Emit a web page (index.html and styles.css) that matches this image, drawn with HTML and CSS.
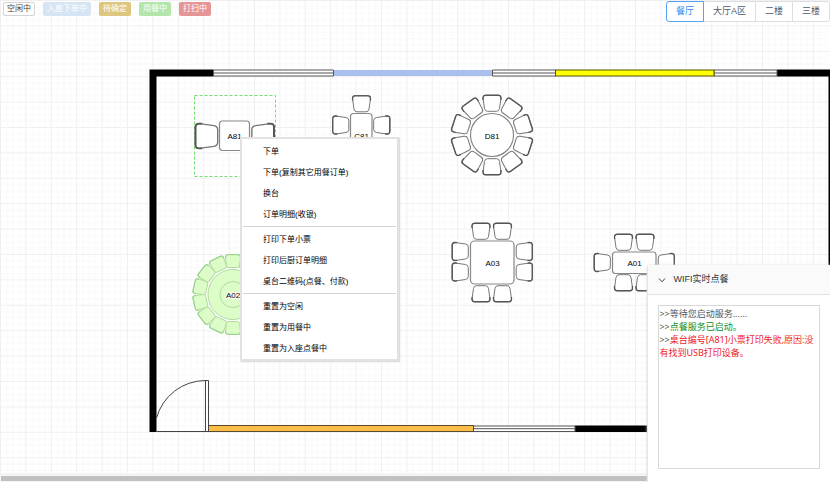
FILE: index.html
```
<!DOCTYPE html>
<html lang="zh-CN">
<head>
<meta charset="utf-8">
<title>餐厅</title>
<link rel="stylesheet" href="styles.css">
</head>
<body>
<main class="workspace">
  <section class="stage">
    <svg class="plan" role="img" aria-label="餐厅">
      <defs>
        <pattern id="grid" width="25.4" height="25.4" patternUnits="userSpaceOnUse">
          <path class="grid-minor" d="M6.8 0V25.4M13.2 0V25.4M19.5 0V25.4M0 6.8H25.4M0 13.2H25.4M0 19.5H25.4"/>
          <path class="grid-major" d="M.5 0V25.4M0 .5H25.4"/>
        </pattern>
        <g id="chair">
          <path class="seat" d="M-6.5 .5H6.5Q9 .5 9 3.5L7.5 14Q7 16.8 4.5 16.8H-4.5Q-7 16.8-7.5 14L-9 3.5Q-9 .5-6.5 .5Z"/>
          <path class="back" d="M-8.9 5.5L-9 3.5Q-9 .8-6.5 .8H6.5Q9 .8 9 3.5L8.9 5.5"/>
        </g>
        <g id="busy-chair">
          <path class="busy" d="M-5 .5H5Q7.6 .5 7.5 3L6.6 11.5Q6.4 13.5 4.5 13.5H-4.5Q-6.4 13.5-6.6 11.5L-7.5 3Q-7.6 .5-5 .5Z"/>
          <path class="busy-back" d="M-7.4 4V3Q-7.5 .7-5 .7H5Q7.5 .7 7.4 3V4"/>
        </g>
      </defs>
      <rect width="100%" height="100%" fill="url(#grid)"/>

      <g class="walls">
        <path d="M149.500 69.500H213.500V76.500H156.500V432H149.500Z"/>
        <path d="M777 69.500H830V265H828.500V76.500H777Z"/>
        <path d="M575 425.500H700V432H575Z"/>
      </g>
      <rect class="blue-bar" x="334" y="70" width="159" height="6"/>
      <g class="window">
        <path d="M213.500 70H333.500V76H213.500ZM213.500 73H333.500"/>
        <path d="M492.500 70H555.500V76H492.500ZM492.500 73H555.500"/>
        <path d="M714 70H777V76H714ZM714 73H777"/>
        <path d="M473.500 426H575V431.500H473.500ZM473.500 428.700H575"/>
      </g>
      <rect class="yellow-bar" x="555.5" y="70" width="158.500" height="6"/>
      <rect class="orange-bar" x="208.500" y="425.500" width="265" height="6"/>
      <path class="door" d="M156.500 431.500H208.500V380.500H205.500V431.500M205.500 380.500A51 51 0 0 0 156.500 418"/>

      <rect class="selection" x="194.500" y="95.500" width="81" height="81"/>
      <g>
        <rect class="table" x="219.500" y="121" width="30" height="29.500" rx="3"/>
        <use href="#chair" transform="translate(194.500 136) rotate(-90) scale(1.38)"/>
        <use href="#chair" transform="translate(275 136) rotate(90) scale(1.38)"/>
        <text x="234.500" y="139">A81</text>
      </g>
      <g>
        <rect class="table" x="350.500" y="113.500" width="21.500" height="43" rx="3"/>
        <use href="#chair" x="361.500" y="95"/>
        <use href="#chair" transform="translate(332 125) rotate(-90)"/>
        <use href="#chair" transform="translate(390.500 125) rotate(90)"/>
        <text x="361.500" y="139">C81</text>
      </g>
      <g transform="translate(492 135)">
        <circle class="table" r="21.500"/>
        <use href="#chair" y="-40.500"/>
        <use href="#chair" y="-41" transform="rotate(36)"/>
        <use href="#chair" y="-41" transform="rotate(72)"/>
        <use href="#chair" y="-41" transform="rotate(108)"/>
        <use href="#chair" y="-41" transform="rotate(144)"/>
        <use href="#chair" y="-40.500" transform="rotate(180)"/>
        <use href="#chair" y="-41" transform="rotate(216)"/>
        <use href="#chair" y="-41" transform="rotate(252)"/>
        <use href="#chair" y="-41" transform="rotate(288)"/>
        <use href="#chair" y="-41" transform="rotate(324)"/>
        <text y="4">D81</text>
      </g>
      <g>
        <rect class="table" x="470.500" y="241" width="43.500" height="43" rx="4"/>
        <use href="#chair" x="481" y="222.500"/>
        <use href="#chair" x="502.500" y="222.500"/>
        <use href="#chair" transform="translate(481 302.500) rotate(180)"/>
        <use href="#chair" transform="translate(502.500 302.500) rotate(180)"/>
        <use href="#chair" transform="translate(451.500 251.500) rotate(-90)"/>
        <use href="#chair" transform="translate(451.500 272) rotate(-90)"/>
        <use href="#chair" transform="translate(533 251.500) rotate(90)"/>
        <use href="#chair" transform="translate(533 272) rotate(90)"/>
        <text x="492.500" y="266">A03</text>
      </g>
      <g>
        <rect class="table" x="612.500" y="252" width="43.500" height="21.500" rx="3"/>
        <use href="#chair" x="623.500" y="233.500"/>
        <use href="#chair" x="645" y="233.500"/>
        <use href="#chair" transform="translate(623.500 291.500) rotate(180)"/>
        <use href="#chair" transform="translate(645 291.500) rotate(180)"/>
        <use href="#chair" transform="translate(593.500 262.500) rotate(-90)"/>
        <use href="#chair" transform="translate(675 262.500) rotate(90)"/>
        <text x="634.500" y="266">A01</text>
      </g>
      <g transform="translate(233 294.500)">
        <circle class="busy" r="25"/>
        <circle class="busy" r="13"/>
        <use href="#busy-chair" y="-40.500"/>
        <use href="#busy-chair" y="-40.500" transform="rotate(25.700)"/>
        <use href="#busy-chair" y="-40.500" transform="rotate(180)"/>
        <use href="#busy-chair" y="-40.500" transform="rotate(205.700)"/>
        <use href="#busy-chair" y="-40.500" transform="rotate(231.400)"/>
        <use href="#busy-chair" y="-40.500" transform="rotate(257.100)"/>
        <use href="#busy-chair" y="-40.500" transform="rotate(282.900)"/>
        <use href="#busy-chair" y="-40.500" transform="rotate(308.600)"/>
        <use href="#busy-chair" y="-40.500" transform="rotate(334.300)"/>
        <text class="halo" y="3">A02</text>
      </g>
    </svg>

    <header class="toolbar">
      <div class="legend">
        <span class="tag tag-free">空闲中</span>
        <span class="tag tag-seated">入座下单中</span>
        <span class="tag tag-pending">待确定</span>
        <span class="tag tag-dining">用餐中</span>
        <span class="tag tag-cleaning">打扫中</span>
      </div>
      <nav class="areas">
        <button class="area area-active" type="button">餐厅</button>
        <button class="area" type="button">大厅A区</button>
        <button class="area" type="button">二楼</button>
        <button class="area" type="button">三楼</button>
      </nav>
    </header>

    <div class="menu">
      <div class="menu-group">
        <button class="menu-item" type="button">下单</button>
        <button class="menu-item" type="button">下单(复制其它用餐订单)</button>
        <button class="menu-item" type="button">换台</button>
        <button class="menu-item" type="button">订单明细(收银)</button>
      </div>
      <div class="menu-group">
        <button class="menu-item" type="button">打印下单小票</button>
        <button class="menu-item" type="button">打印后厨订单明细</button>
        <button class="menu-item" type="button">桌台二维码(点餐、付款)</button>
      </div>
      <div class="menu-group">
        <button class="menu-item" type="button">重置为空闲</button>
        <button class="menu-item" type="button">重置为用餐中</button>
        <button class="menu-item" type="button">重置为入座点餐中</button>
      </div>
    </div>
  </section>
  <div class="scroll-track"><div class="scroll-thumb"></div></div>

  <aside class="panel">
    <button class="panel-head" type="button">
      <svg class="chevron" viewBox="0 0 8 8" aria-hidden="true"><path d="M1 2.500L4 5.800L7 2.500"/></svg>
      <span>WIFI实时点餐</span>
    </button>
    <div class="log">
      <p>&gt;&gt;等待您启动服务......</p>
      <p>&gt;&gt;<span class="ok">点餐服务已启动。</span></p>
      <p>&gt;&gt;<span class="error">桌台编号[A81]小票打印失败,原因:没有找到USB打印设备。</span></p>
    </div>
  </aside>
</main>
</body>
</html>
```
FILE: styles.css
```
* {
  box-sizing: border-box;
}

body {
  margin: 0;
  background: #fff;
  color: #555;
  font-family: "Liberation Sans", "Noto Sans CJK SC", sans-serif;
  font-size: 9px;
}

button {
  margin: 0;
  font: inherit;
  cursor: pointer;
}

.workspace {
  position: relative;
  display: flex;
  flex-direction: column;
  height: 100vh;
  overflow: hidden;
}

.stage {
  position: relative;
  flex: 1;
  min-height: 0;
  border-left: 1px solid #c8c8cc;
}

/* Floor plan */
.plan {
  display: block;
  width: calc(100% + 1px);
  height: 100%;
  margin-left: -1px;
}

.plan text {
  fill: #000;
  font-size: 8px;
  text-anchor: middle;
}

.grid-minor {
  fill: none;
  stroke: #f9f9f9;
}

.grid-major {
  fill: none;
  stroke: #f0f0f0;
}

.walls {
  fill: #000;
}

.window path {
  fill: #fff;
  stroke: #555;
}

.blue-bar {
  fill: #a9bfed;
}

.yellow-bar {
  fill: #ff0;
  stroke: #55550a;
}

.orange-bar {
  fill: #fdbd49;
  stroke: #5a4a2a;
}

.door {
  fill: none;
  stroke: #444;
}

.selection {
  fill: none;
  stroke: #6fe06f;
  stroke-dasharray: 3 2;
}

.table {
  fill: #fff;
  stroke: #888;
  stroke-width: 1.2;
}

.seat {
  fill: #fff;
  stroke: #777;
}

.back {
  fill: none;
  stroke: #555;
  stroke-width: 1.3;
}

.busy {
  fill: #dcfdc8;
  stroke: #b0dca0;
}

.busy-back {
  fill: none;
  stroke: #98d08c;
}

.halo {
  paint-order: stroke;
  stroke: #fff;
  stroke-width: 2px;
}

/* Status legend and area switch */
.toolbar {
  position: absolute;
  inset: 0 0 auto 0;
  display: flex;
  justify-content: space-between;
  align-items: flex-start;
  padding: 1px 0 0 2px;
}

.legend {
  display: flex;
  gap: 8px;
  padding-top: 1px;
}

.tag {
  padding: 0 3px;
  border: 1px solid transparent;
  border-radius: 2px;
  color: #fff;
  font-size: 8px;
  line-height: 12px;
}

.tag-free {
  border-color: #d4d4d4;
  background: #fff;
  color: #444;
}

.tag-seated {
  background: #d6e5f4;
}

.tag-pending {
  background: #dfc67e;
}

.tag-dining {
  background: #b3e6ab;
}

.tag-cleaning {
  background: #e59595;
}

.areas {
  display: flex;
}

.area {
  margin-right: -1px;
  padding: 0 9px;
  border: 1px solid #dcdee2;
  background: #fff;
  color: #515a6e;
  line-height: 19px;
}

.area:last-child {
  margin-right: 0;
  border-radius: 0 3px 3px 0;
}

.area-active {
  z-index: 1;
  border-color: #57a3f3;
  border-radius: 3px 0 0 3px;
  color: #2d8cf0;
}

/* Table context menu */
.menu {
  position: absolute;
  top: 137px;
  left: 239px;
  width: 159px;
  padding: 2px 1px 0;
  border: 2px solid #e2e2e2;
  background: #fff;
  box-shadow: 1px 1px 1px #ddd;
}

.menu-group + .menu-group {
  margin-top: 1px;
  padding-top: 2px;
  border-top: 1px solid #d4d4d4;
}

.menu-item {
  display: block;
  width: 100%;
  padding: 0 0 0 20px;
  border: 0;
  background: none;
  color: #000;
  font-size: 8px;
  line-height: 21px;
  text-align: left;
}

/* Horizontal scroll strip */
.scroll-track {
  padding: 3px 0 1px 1px;
  background: #f4f4f4;
}

.scroll-thumb {
  height: 5px;
  background: #c1c1c1;
}

/* Live ordering panel */
.panel {
  position: absolute;
  right: 0;
  bottom: 0;
  display: flex;
  flex-direction: column;
  width: 22%;
  height: 45%;
  border-left: 1px solid #e4e4e4;
  border-radius: 3px 0 0 0;
  background: #fff;
  box-shadow: 0 0 3px #ddd;
}

.panel-head {
  display: flex;
  align-items: center;
  gap: 7px;
  padding: 0 10px;
  border: 0;
  border-bottom: 1px solid #e3e3e3;
  background: #fafafa;
  color: #333;
  line-height: 29px;
}

.chevron {
  width: 8px;
  height: 8px;
  fill: none;
  stroke: #444;
}

.log {
  flex: 1;
  margin: 10px 10px 13px;
  padding: 1px 0;
  border: 1px solid #d8d8d8;
  font-family: "Noto Sans", "Noto Sans CJK SC", sans-serif;
  line-height: 13px;
}

.log p {
  margin: 0;
}

.ok {
  color: #0b8f1c;
}

.error {
  color: #ee1c25;
}
```
